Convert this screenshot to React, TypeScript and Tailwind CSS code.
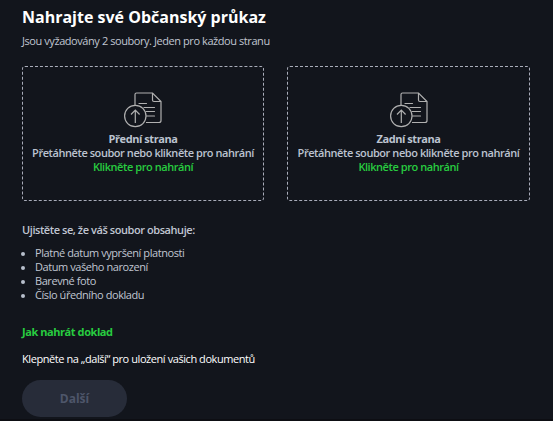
import React from "react";

const requirements = [
  "Platné datum vypršení platnosti",
  "Datum vašeho narození",
  "Barevné foto",
  "Číslo úředního dokladu",
];

const UploadIcon = () => (
  <svg width="38" height="36" viewBox="0 0 38 36" fill="none" stroke="#b0b0b0" strokeWidth="1.2">
    <path d="M11 13V2.500Q11 1 12.500 1H28.500L37 9.500V28.500Q37 30.500 35 30.500H22" />
    <path d="M28.500 1V8Q28.500 9.500 30 9.500H37" />
    <path d="M15 11.500H22.500M20 15.500H30.500M22 19.500H30.500M22.500 24H30.500" strokeLinecap="round" />
    <circle cx="11.300" cy="24" r="10.700" />
    <path d="M11.300 31V18.500M7 22.500L11.300 18.200L15.600 22.500" />
  </svg>
);

const UploadBox = ({ title }: { title: string }) => (
  <div className="w-full h-[135px] border border-dashed border-[#a9acb9] rounded-[3px] flex flex-col items-center pt-[25px] text-[11px] leading-[14px] font-semibold tracking-[-0.44px] text-[#bcc3d0] whitespace-nowrap">
    <UploadIcon />
    <p className="mt-[4px] font-bold">{title}</p>
    <p>Přetáhněte soubor nebo klikněte pro nahrání</p>
    <p className="text-[#28cc40]">Klikněte pro nahrání</p>
  </div>
);

export default function App() {
  return (
    <div className="w-[553px] h-[421px] overflow-hidden bg-[#12151c] border-b-2 border-[#0d0e13] pl-[22px] pt-[6px] font-['Open_Sans',sans-serif] text-[11px] leading-[14px] tracking-[-0.43px] text-[#c0c6d2]">
      <h1 className="text-[16px] leading-[22px] font-bold tracking-normal text-white">Nahrajte své Občanský průkaz</h1>
      <p className="mt-[6px]">Jsou vyžadovány 2 soubory. Jeden pro každou stranu</p>
      <div className="mt-[18px] grid grid-cols-[242px_243px] gap-[23px]">
        <UploadBox title="Přední strana" />
        <UploadBox title="Zadní strana" />
      </div>
      <h2 className="mt-[22px] font-semibold">Ujistěte se, že váš soubor obsahuje:</h2>
      <ul className="mt-[9px]">
        {requirements.map((item) => (
          <li key={item} className="flex items-center">
            <span className="w-1 h-1 mt-px mr-[10px] -ml-px rounded-full bg-[#b8bfcc]" />
            {item}
          </li>
        ))}
      </ul>
      <a className="block mt-[23px] font-bold text-[#28cc40]">Jak nahrát doklad</a>
      <p className="mt-[13px] text-white">Klepněte na „další“ pro uložení vašich dokumentů</p>
      <button className="mt-[14px] w-[105px] h-[37px] rounded-full bg-[#272c39] text-[12px] font-bold tracking-normal text-[#4e566a]">
        Další
      </button>
    </div>
  );
}
